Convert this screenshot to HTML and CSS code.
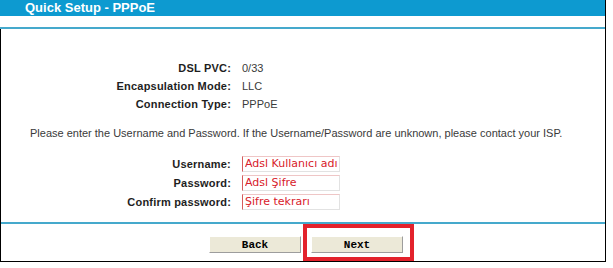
FILE: index.html
```html
<!DOCTYPE html>
<html lang="en">
<head>
  <meta charset="UTF-8" />
  <title>Quick Setup - PPPoE</title>
  <link rel="stylesheet" href="styles.css">
</head>
<body>
  <div class="frame">
    <div class="title">Quick Setup - PPPoE</div>
    <div class="title-gap"></div>

    <div class="panel">
      <div class="info">
        <div class="label">DSL PVC:</div>
        <div class="value">0/33</div>
        <div class="label">Encapsulation Mode:</div>
        <div class="value">LLC</div>
        <div class="label">Connection Type:</div>
        <div class="value">PPPoE</div>
      </div>

      <p class="note">Please enter the Username and Password. If the Username/Password are unknown, please contact your ISP.</p>

      <div class="form">
        <label class="label" for="user">Username:</label>
        <div class="field"><input id="user" class="text-input" type="text" value="Adsl Kullanıcı adı"></div>
        <label class="label" for="pass">Password:</label>
        <div class="field"><input id="pass" class="text-input" type="text" value="Adsl Şifre"></div>
        <label class="label" for="pass2">Confirm password:</label>
        <div class="field"><input id="pass2" class="text-input" type="text" value="Şifre tekrarı"></div>
      </div>

      <div class="separator"></div>

      <div class="actions">
        <button class="btn btn-back">Back</button>
        <div class="highlight">
          <button class="btn">Next</button>
        </div>
      </div>
    </div>
  </div>
</body>
</html>
```

FILE: styles.css
```css
:root {
  --blue: #0d9ad0;
  --line: #45a9cc;
  --text: #3a3a3a;
  --label: #1e1e1e;
}

body {
  margin: 0;
  background: #ffffff;
  font-family: 'Liberation Sans', Arial, sans-serif;
  font-size: 11px;
  color: var(--text);
}

.frame {
  width: 605px;
  border-right: 1px solid #000;
}

.title {
  height: 16px;
  line-height: 16px;
  padding-left: 25px;
  background: var(--blue);
  color: #fff;
  font-size: 13px;
  font-weight: bold;
}

.title-gap {
  height: 11px;
  border-bottom: 2px solid var(--line);
}

.panel {
  border-left: 1px solid #000;
  border-bottom: 1px solid #000;
  padding-top: 30px;
}

.info {
  display: grid;
  grid-template-columns: 230px 1fr;
  column-gap: 11px;
  grid-auto-rows: 18px;
  align-items: center;
}

.label {
  text-align: right;
  font-weight: bold;
  letter-spacing: 0.2px;
  color: var(--label);
}

.value {
  color: var(--text);
}

.note {
  margin: 11px 0 0;
  padding-left: 29px;
  line-height: 18px;
  color: var(--text);
}

.form {
  margin-top: 12px;
  display: grid;
  grid-template-columns: 230px 1fr;
  column-gap: 11px;
  grid-auto-rows: 19px;
  align-items: center;
}

.text-input {
  display: block;
  width: 98px;
  height: 16px;
  box-sizing: border-box;
  margin: 0;
  padding: 0 0 0 2px;
  border: 1px solid #e2e2e2;
  border-top-color: #efc6c6;
  border-left-color: #d65c5c;
  font-family: 'DejaVu Sans', sans-serif;
  font-size: 11px;
  line-height: 14px;
  color: #d8202a;
  background: #fff;
}

.separator {
  margin-top: 11px;
  height: 2px;
  background: var(--line);
}

.actions {
  display: flex;
  align-items: flex-start;
  padding-left: 208px;
  height: 37px;
}

.btn {
  width: 92px;
  height: 17px;
  box-sizing: border-box;
  padding: 0;
  background: #ece9d8;
  border: 1px solid #fff;
  border-right-color: #9d9d9d;
  border-bottom-color: #9d9d9d;
  font-family: 'Liberation Mono', 'Courier New', monospace;
  font-size: 11px;
  font-weight: bold;
  color: #000;
}

.btn-back {
  margin-top: 12px;
}

.highlight {
  margin-left: 2px;
  height: 37px;
  box-sizing: border-box;
  border: 4px solid #e3222c;
  padding: 8px 7px 0 4px;
}
```
